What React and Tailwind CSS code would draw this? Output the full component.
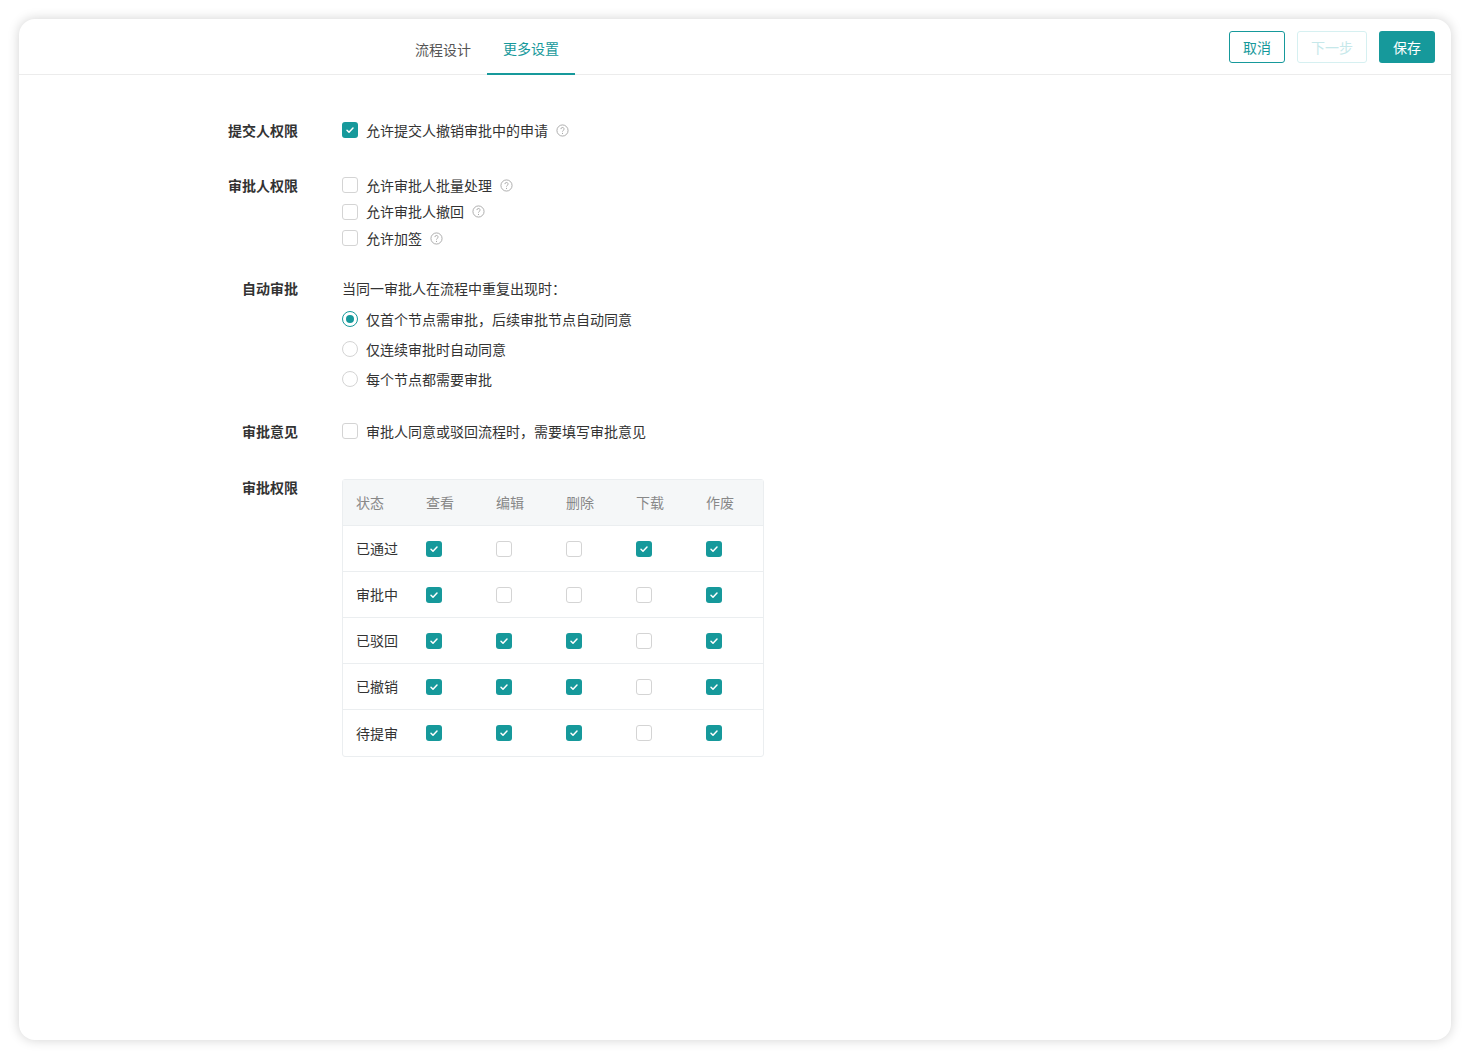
import React from "react";

const Help = () => (
  <svg width="13" height="13" viewBox="0 0 14 14" className="ml-2 shrink-0">
    <circle cx="7" cy="7" r="6" fill="none" stroke="#a8a8a8" strokeWidth="1" />
    <path d="M5.3 5.5a1.7 1.7 0 1 1 2.4 1.5c-.5.3-.7.6-.7 1.1" fill="none" stroke="#a8a8a8" strokeWidth="1" />
    <circle cx="7" cy="10.1" r=".6" fill="#a8a8a8" />
  </svg>
);
const Cb = ({ on }) =>
  on ? (
    <span className="w-4 h-4 rounded-[3px] bg-[#16999b] flex items-center justify-center shrink-0">
      <svg width="10" height="10" viewBox="0 0 10 10"><path d="M2 5.2l2 2 4-4.2" fill="none" stroke="#fff" strokeWidth="1.5" strokeLinecap="round" strokeLinejoin="round" /></svg>
    </span>
  ) : (
    <span className="block w-4 h-4 rounded-[3px] border border-[#d4d4d4] bg-white shrink-0" />
  );
const Radio = ({ on }) =>
  on ? (
    <span className="w-4 h-4 rounded-full border border-[#16999b] flex items-center justify-center shrink-0">
      <span className="w-2 h-2 rounded-full bg-[#16999b]" />
    </span>
  ) : (
    <span className="block w-4 h-4 rounded-full border border-[#d4d4d4] shrink-0" />
  );
const Label = ({ children }) => (
  <div className="w-[323px] pr-[44px] text-right font-bold text-[#333] leading-[20px] shrink-0">{children}</div>
);
const Opt = ({ children, on, help, radio }) => (
  <div className="flex items-center h-[20px]">
    {radio ? <Radio on={on} /> : <Cb on={on} />}
    <span className="ml-2 text-[#333]">{children}</span>
    {help && <Help />}
  </div>
);

const rows = [
  ["已通过", [1, 0, 0, 1, 1]],
  ["审批中", [1, 0, 0, 0, 1]],
  ["已驳回", [1, 1, 1, 0, 1]],
  ["已撤销", [1, 1, 1, 0, 1]],
  ["待提审", [1, 1, 1, 0, 1]],
];

export default function App() {
  return (
    <div className="w-[1469px] h-[1058px] bg-white p-[19px] text-[14px]" style={{ fontFamily: '"Noto Sans CJK SC", "Noto Sans", sans-serif' }}>
      <div className="h-[1021px] w-[1432px] rounded-[16px] bg-white shadow-[0_0_12px_rgba(0,0,0,0.18)] overflow-hidden">
        <div className="h-[56px] border-b border-[#ececec] flex items-stretch relative">
          <div className="ml-[377px] flex">
            <div className="pl-[19px] pr-[16px] flex items-center text-[#555] pt-[5px]">流程设计</div>
            <div className="px-[16px] flex items-center text-[#16999b] pt-[5px] border-b-2 border-[#16999b] -mb-px">更多设置</div>
          </div>
          <div className="absolute right-[16px] top-[12px] flex gap-3">
            <button className="w-[56px] h-[32px] rounded-[3px] border border-[#16999b] text-[#16999b] bg-white">取消</button>
            <button className="w-[70px] h-[32px] rounded-[3px] border border-[#d6f0f1] text-[#c6e8ea] bg-white">下一步</button>
            <button className="w-[56px] h-[32px] rounded-[3px] bg-[#16999b] text-white">保存</button>
          </div>
        </div>
        <div className="pt-[45px]">
          <div className="flex">
            <Label>提交人权限</Label>
            <Opt on help>允许提交人撤销审批中的申请</Opt>
          </div>
          <div className="flex mt-[35px]">
            <Label>审批人权限</Label>
            <div className="flex flex-col gap-[6.5px]">
              <Opt help>允许审批人批量处理</Opt>
              <Opt help>允许审批人撤回</Opt>
              <Opt help>允许加签</Opt>
            </div>
          </div>
          <div className="flex mt-[30px]">
            <Label>自动审批</Label>
            <div className="flex flex-col">
              <div className="h-[20px] text-[#333]">当同一审批人在流程中重复出现时：</div>
              <div className="flex flex-col gap-[10px] mt-[11px]">
                <Opt radio on>仅首个节点需审批，后续审批节点自动同意</Opt>
                <Opt radio>仅连续审批时自动同意</Opt>
                <Opt radio>每个节点都需要审批</Opt>
              </div>
            </div>
          </div>
          <div className="flex mt-[32px]">
            <Label>审批意见</Label>
            <Opt>审批人同意或驳回流程时，需要填写审批意见</Opt>
          </div>
          <div className="flex mt-[36px]">
            <Label>审批权限</Label>
            <div className="mt-[2px] w-[422px] border border-[#ebeef0] rounded-[3px]">
              <div className="h-[46px] bg-[#f5f7f8] flex items-center border-b border-[#ebeef0] text-[#888]">
                {["状态", "查看", "编辑", "删除", "下载", "作废"].map((h) => (
                  <div key={h} className="w-[70px] pl-[13px]">{h}</div>
                ))}
              </div>
              {rows.map(([n, v], i) => (
                <div key={n} className={"h-[46px] flex items-center " + (i < 4 ? "border-b border-[#ebeef0]" : "")}>
                  <div className="w-[70px] pl-[13px] text-[#333]">{n}</div>
                  {v.map((c, j) => (
                    <div key={j} className="w-[70px] pl-[13px]"><Cb on={c} /></div>
                  ))}
                </div>
              ))}
            </div>
          </div>
        </div>
      </div>
    </div>
  );
}
